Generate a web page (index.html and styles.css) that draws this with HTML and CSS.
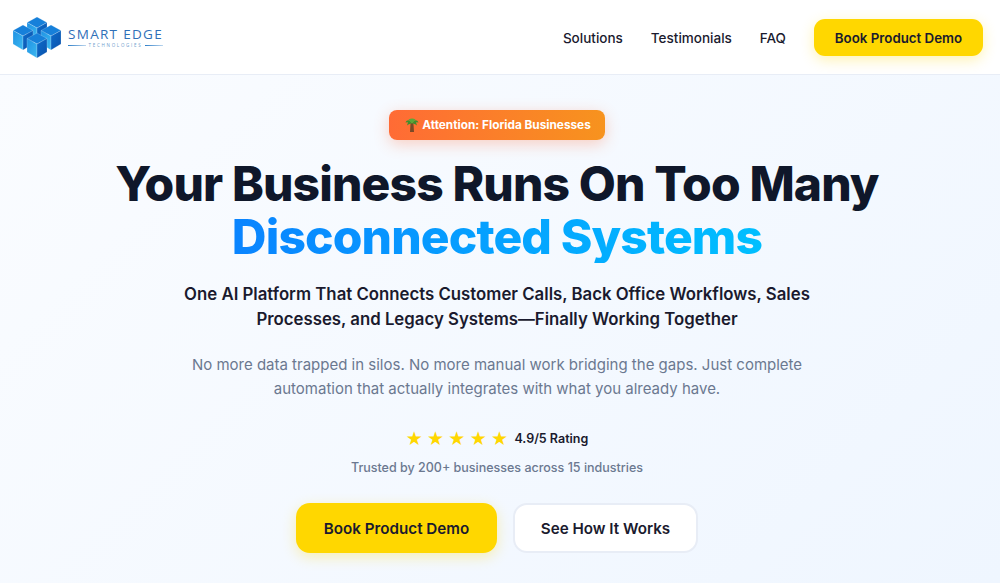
FILE: index.html
```html
<!DOCTYPE html>
<html lang="en">
<head>
    <meta charset="UTF-8">
    <meta name="viewport" content="width=device-width, initial-scale=1.0">
    <title>Smart Edge Technologies</title>
    <link rel="stylesheet" href="styles.css">
</head>
<body>
    <!-- Header -->
    <header class="header">
        <a class="logo" href="#">
            <svg class="logo-mark" width="48" height="41" viewBox="0 0 48 41">
                <defs>
                    <linearGradient id="cubeLeft" x1="0" y1="0" x2="1" y2="1">
                        <stop offset="0" stop-color="#1f92e4"/>
                        <stop offset="1" stop-color="#3cb8f0"/>
                    </linearGradient>
                    <linearGradient id="cubeRight" x1="0" y1="0" x2="1" y2="1">
                        <stop offset="0" stop-color="#0c6ccb"/>
                        <stop offset="1" stop-color="#0a52ac"/>
                    </linearGradient>
                    <g id="cube" stroke="#fff" stroke-width="0.2">
                        <polygon points="24,0 34,5.5 24,11 14,5.5" fill="#1680da"/>
                        <polygon points="14,5.5 24,11 24,25 14,19" fill="url(#cubeLeft)"/>
                        <polygon points="24,11 34,5.5 34,19 24,25" fill="url(#cubeRight)"/>
                    </g>
                </defs>
                <use href="#cube"/>
                <use href="#cube" x="-14" y="8"/>
                <use href="#cube" x="14" y="8"/>
                <use href="#cube" y="16"/>
            </svg>
            <span class="logo-text">
                <span class="logo-name">SMART EDGE</span>
                <span class="logo-sub">TECHNOLOGIES</span>
            </span>
        </a>
        <nav class="nav">
            <a href="#">Solutions</a>
            <a href="#">Testimonials</a>
            <a href="#">FAQ</a>
            <a class="btn btn-small" href="#">Book Product Demo</a>
        </nav>
    </header>

    <!-- Hero -->
    <main class="hero">
        <div class="badge">
            <svg class="palm" width="14" height="14" viewBox="0 0 14 14">
                <path d="M5.6 5 L8.4 5 L9 14 L5 14 Z" fill="#7a4a26"/>
                <path d="M7 5.5 C5 1.5 2 1.5 .5 4.5 L3 4.2 L2 7.5 C4 6 5.5 5.5 7 5.5 Z" fill="#3f8f2f"/>
                <path d="M7 5.5 C9 1.5 12 1.5 13.5 4.5 L11 4.2 L12 7.5 C10 6 8.5 5.5 7 5.5 Z" fill="#3f8f2f"/>
                <path d="M3.5 1.5 C6 0 8 0 10.5 1.5 L7 5.5 Z" fill="#5aa83a"/>
            </svg>
            <span>Attention: Florida Businesses</span>
        </div>
        <h1>Your Business Runs On Too Many <span class="grad">Disconnected Systems</span></h1>
        <p class="sub">One AI Platform That Connects Customer Calls, Back Office Workflows, Sales Processes, and Legacy Systems—Finally Working Together</p>
        <p class="desc">No more data trapped in silos. No more manual work bridging the gaps. Just complete automation that actually integrates with what you already have.</p>
        <div class="rating">
            <span class="stars">★★★★★</span>
            <span class="rating-text">4.9/5 Rating</span>
        </div>
        <p class="trusted">Trusted by 200+ businesses across 15 industries</p>
        <div class="cta">
            <a class="btn btn-large" href="#">Book Product Demo</a>
            <a class="btn btn-large btn-white" href="#">See How It Works</a>
        </div>
    </main>
</body>
</html>
```

FILE: styles.css
```css
* {
    box-sizing: border-box;
}

body {
    margin: 0;
    height: 583px;
    overflow: hidden;
    font-family: Inter, "Liberation Sans", sans-serif;
    color: #1a1a2e;
    background: #fff;
}

a {
    text-decoration: none;
    color: inherit;
}

/* Header */
.header {
    height: 75px;
    display: flex;
    align-items: center;
    justify-content: space-between;
    padding: 0 17px 0 13px;
    background: #fff;
    border-bottom: 1px solid #e8edf6;
}

.logo {
    display: flex;
    align-items: center;
    gap: 7px;
    margin-top: 1px;
}

.logo-text {
    display: flex;
    flex-direction: column;
    align-items: center;
    color: #2f6fb8;
}

.logo-name {
    font-family: "Open Sans", sans-serif;
    font-size: 13.5px;
    line-height: 15px;
    letter-spacing: 1.3px;
}

.logo-sub {
    display: flex;
    align-items: center;
    gap: 3px;
    align-self: stretch;
    font-family: "Open Sans", sans-serif;
    font-size: 4.5px;
    line-height: 6px;
    letter-spacing: 1.7px;
    color: #6f9ccc;
}

.logo-sub::before,
.logo-sub::after {
    content: "";
    flex: 1;
    height: 1px;
    background: linear-gradient(90deg, #2f7fc8, #bcd6ee);
}

.nav {
    display: flex;
    align-items: center;
    gap: 28px;
    font-size: 13.5px;
    font-weight: 500;
    color: #1a1a2e;
}

.nav a {
    padding-top: 1px;
}

/* Buttons */
.btn {
    display: flex;
    flex-shrink: 0;
    align-items: center;
    justify-content: center;
    font-weight: 600;
    color: #1a1a2e;
    background: #ffd700;
    box-shadow: 0 4px 14px rgba(255, 215, 0, 0.3);
}

.btn-small {
    width: 169px;
    height: 37px;
    border-radius: 11px;
    font-size: 13.3px;
}

.btn-large {
    height: 50px;
    border-radius: 14px;
    font-size: 15.2px;
    width: 201px;
}

.btn-white {
    width: 185px;
    background: #fff;
    border: 2px solid #e8edf6;
    box-shadow: none;
}

/* Hero */
.hero {
    height: 508px;
    display: flex;
    flex-direction: column;
    align-items: center;
    padding: 35px 6px 0 0;
    background: linear-gradient(135deg, #fafcff 0%, #eff6ff 100%);
}

.badge {
    display: flex;
    flex-shrink: 0;
    align-items: center;
    gap: 3px;
    height: 30px;
    padding: 0 14px 0 16px;
    border-radius: 8px;
    font-size: 11.8px;
    font-weight: 700;
    color: #fff;
    background: linear-gradient(90deg, #ff6b35, #f7931e);
    box-shadow: 0 4px 15px rgba(255, 107, 53, 0.3);
}

h1 {
    width: 900px;
    margin: 17px 0 0;
    text-align: center;
    font-size: 48px;
    line-height: 53px;
    font-weight: 800;
    letter-spacing: -0.88px;
    color: #0f172a;
}

.grad {
    display: block;
    width: fit-content;
    margin: 0 auto;
    background: linear-gradient(90deg, #0a84ff, #00bfff);
    -webkit-background-clip: text;
    background-clip: text;
    color: transparent;
}

.sub {
    width: 660px;
    margin: 19px 0 0;
    text-align: center;
    font-size: 16.8px;
    line-height: 25px;
    font-weight: 600;
    color: #1a1a2e;
}

.desc {
    width: 660px;
    margin: 21px 0 0;
    text-align: center;
    font-size: 15px;
    line-height: 24px;
    color: #6b7890;
}

.rating {
    display: flex;
    align-items: center;
    gap: 2px;
    margin-top: 25px;
}

.stars {
    font-size: 19px;
    line-height: 24px;
    letter-spacing: 4.3px;
    color: #ffd700;
    font-family: "DejaVu Sans", sans-serif;
}

.rating-text {
    font-size: 12.5px;
    font-weight: 600;
    color: #1a1a2e;
}

.trusted {
    margin: 8px 0 0;
    font-size: 12.5px;
    line-height: 20px;
    font-weight: 500;
    color: #6b7890;
}

.cta {
    display: flex;
    gap: 16px;
    margin-top: 25px;
}
```
